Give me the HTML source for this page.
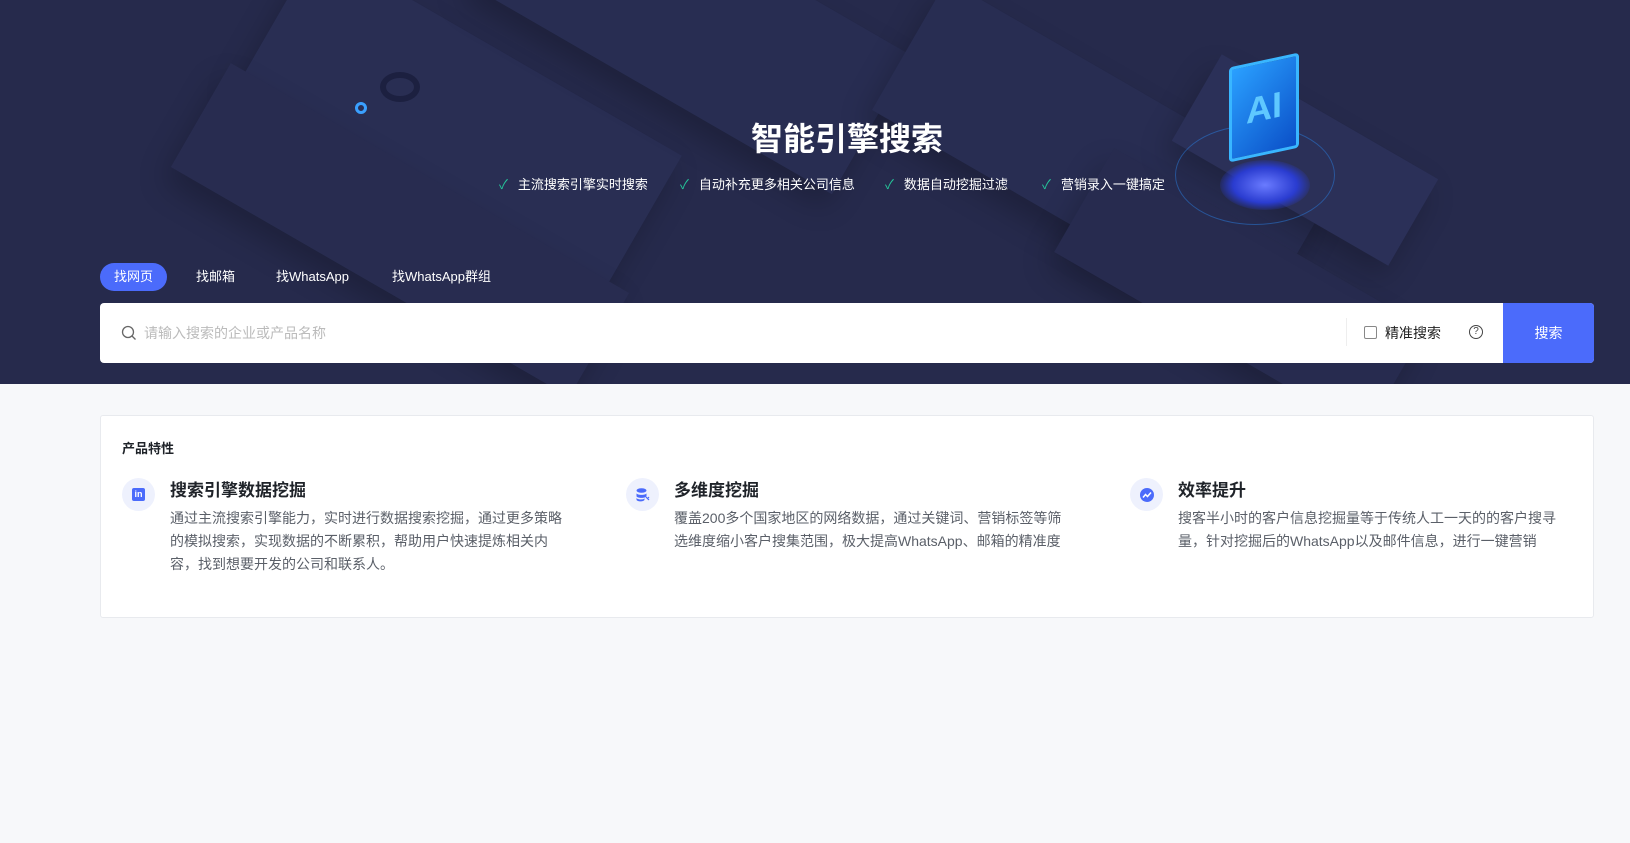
<!DOCTYPE html>
<html><head><meta charset="utf-8"><style>
*{margin:0;padding:0;box-sizing:border-box}
body{width:1630px;height:843px;background:#f7f8fa;font-family:"Liberation Sans","Noto Sans CJK SC",sans-serif;position:relative;overflow:hidden}
.hero{position:absolute;left:0;top:0;width:1630px;height:384px;background:#262a4c;overflow:hidden}
.p{position:absolute;transform:rotate(30deg);background:#292e53;box-shadow:0 16px 30px rgba(0,0,0,.22)}
.title{position:absolute;left:687px;width:320px;top:114px;text-align:center;color:#fff;font-size:32px;font-weight:bold}
.checks{position:absolute;top:174px;font-size:13px;color:#fff}
.checks span{position:absolute;white-space:nowrap}
.checks i{font-style:normal;color:#25c59a;margin-right:10px}
.tabs{position:absolute;top:263px;left:100px;font-size:13px;color:#fff}
.tab{position:absolute;top:0;height:28px;line-height:28px;white-space:nowrap}
.search{position:absolute;left:100px;top:303px;width:1494px;height:60px;background:#fff;border-radius:4px;overflow:hidden}
.btn{position:absolute;right:0;top:0;width:91px;height:60px;background:#4b6bfb;color:#fff;font-size:14px;text-align:center;line-height:60px}
.card{position:absolute;left:100px;top:415px;width:1494px;height:203px;background:#fff;border:1px solid #e8eaee;border-radius:3px}
.col{position:absolute;top:62px}
.ic{position:absolute;left:0;top:0;width:33px;height:33px;border-radius:50%;background:#eef1fd}
.col h3{position:absolute;left:48px;top:-2px;font-size:17px;color:#1f2329;white-space:nowrap;font-weight:bold}
.col p{position:absolute;left:48px;top:29px;width:400px;font-size:14px;line-height:23px;color:#5a5f68}
</style></head><body>
<div class="hero">
 <div class="p" style="left:250px;top:40px;width:420px;height:160px"></div>
 <div class="p" style="left:170px;top:170px;width:460px;height:120px;background:#282c50"></div>
 <div class="p" style="left:480px;top:-60px;width:420px;height:160px;background:#282d52"></div>
 <div class="p" style="left:880px;top:80px;width:440px;height:150px;background:#282d52"></div>
 <div class="p" style="left:1060px;top:230px;width:360px;height:120px;background:#272b4f"></div>
 <div class="p" style="left:1180px;top:110px;width:250px;height:100px;background:#2b3058"></div>
 <div style="position:absolute;left:1175px;top:125px;width:160px;height:100px;border-radius:50%;border:1px solid #2a7de0;opacity:.5"></div>
 <div style="position:absolute;left:1220px;top:160px;width:90px;height:50px;border-radius:50%;background:radial-gradient(#6a7bff,#2a3cd0 50%,rgba(40,50,150,0) 75%)"></div>
 <div style="position:absolute;left:1229px;top:60px;width:70px;height:95px;background:linear-gradient(135deg,#2aa0ff,#0b50c8);border:3px solid #39b6ff;border-radius:4px;transform:skewY(-12deg);color:#5fc8ff;font-size:36px;font-weight:bold;text-align:center;line-height:90px">AI</div>
 <div style="position:absolute;left:380px;top:72px;width:40px;height:30px;border-radius:50%;border:6px solid #1c2040"></div>
 <div style="position:absolute;left:355px;top:102px;width:12px;height:12px;border-radius:50%;border:3px solid #3aa0ff"></div>
 <div class="title">智能引擎搜索</div>
 <div class="checks">
  <span style="left:499px"><i>✓</i>主流搜索引擎实时搜索</span>
  <span style="left:680px"><i>✓</i>自动补充更多相关公司信息</span>
  <span style="left:885px"><i>✓</i>数据自动挖掘过滤</span>
  <span style="left:1042px"><i>✓</i>营销录入一键搞定</span>
 </div>
 <div class="tabs">
  <div class="tab" style="left:0;width:67px;background:#4b6bfb;border-radius:14px;text-align:center">找网页</div>
  <div class="tab" style="left:96px">找邮箱</div>
  <div class="tab" style="left:176px">找WhatsApp</div>
  <div class="tab" style="left:292px">找WhatsApp群组</div>
 </div>
 <div class="search">
  <svg style="position:absolute;left:21px;top:22px" width="16" height="16" viewBox="0 0 16 16"><circle cx="7" cy="7" r="5.5" fill="none" stroke="#666" stroke-width="1.3"/><path d="M11 11l3.5 3.5" stroke="#666" stroke-width="1.3"/></svg>
  <div style="position:absolute;left:44px;top:20px;font-size:14px;color:#bbb">请输入搜索的企业或产品名称</div>
  <div style="position:absolute;left:1246px;top:15px;width:1px;height:28px;background:#eee"></div>
  <div style="position:absolute;left:1264px;top:23px;width:13px;height:13px;border:1px solid #888;border-radius:2px"></div>
  <div style="position:absolute;left:1285px;top:20px;font-size:14px;color:#222">精准搜索</div>
  <div style="position:absolute;left:1369px;top:22px;width:14px;height:14px;border:1.3px solid #444;border-radius:50%;font-size:10px;text-align:center;line-height:12px;color:#444">?</div>
  <div class="btn">搜索</div>
 </div>
</div>
<div class="card">
 <div style="position:absolute;left:21px;top:22px;font-size:13px;font-weight:bold;color:#1f2329">产品特性</div>
 <div class="col" style="left:21px">
  <div class="ic"><div style="position:absolute;left:10px;top:10px;width:13px;height:13px;background:#4b6bfb;border-radius:2px;color:#fff;font-size:9px;font-weight:bold;line-height:13px;text-align:center">in</div></div>
  <h3>搜索引擎数据挖掘</h3>
  <p>通过主流搜索引擎能力，实时进行数据搜索挖掘，通过更多策略的模拟搜索，实现数据的不断累积，帮助用户快速提炼相关内容，找到想要开发的公司和联系人。</p>
 </div>
 <div class="col" style="left:525px">
  <div class="ic"><svg style="position:absolute;left:9px;top:9px" width="16" height="16" viewBox="0 0 16 16"><ellipse cx="6.5" cy="3.5" rx="5" ry="2.3" fill="#4b6bfb"/><path d="M1.5 6c0 2.5 10 2.5 10 0v3c0 2.5-10 2.5-10 0zM1.5 10.5c0 2.5 8 2.5 8 0.5v1.5c0 2.5-8 2.5-8 0z" fill="#4b6bfb"/><path d="M11 10l3 3M14 10l-2 2" stroke="#4b6bfb" stroke-width="1.2"/></svg></div>
  <h3>多维度挖掘</h3>
  <p>覆盖200多个国家地区的网络数据，通过关键词、营销标签等筛选维度缩小客户搜集范围，极大提高WhatsApp、邮箱的精准度</p>
 </div>
 <div class="col" style="left:1029px">
  <div class="ic"><svg style="position:absolute;left:9px;top:9px" width="16" height="16" viewBox="0 0 16 16"><circle cx="8" cy="8" r="7" fill="#4b6bfb"/><path d="M4 10.5l2.5-3 2 2 3.5-4" fill="none" stroke="#fff" stroke-width="1.5"/></svg></div>
  <h3>效率提升</h3>
  <p>搜客半小时的客户信息挖掘量等于传统人工一天的的客户搜寻量，针对挖掘后的WhatsApp以及邮件信息，进行一键营销</p>
 </div>
</div>
</body></html>
